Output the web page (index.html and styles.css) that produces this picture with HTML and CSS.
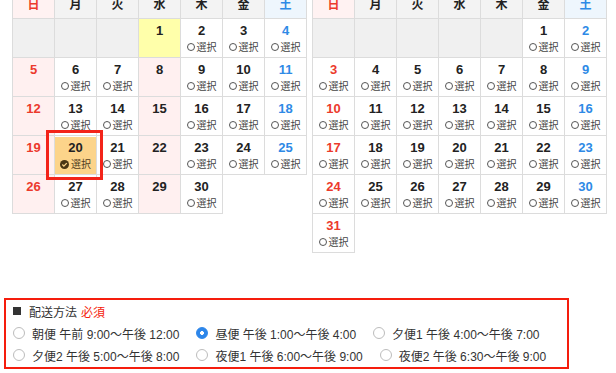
FILE: index.html
```html
<!DOCTYPE html>
<html lang="ja">
<head>
<meta charset="utf-8">
<title>配送日時</title>
<link rel="stylesheet" href="styles.css">
</head>
<body>
<div class="page">
  <div class="calendars">
    <div class="cal">
      <div class="hd sun">日</div><div class="hd">月</div><div class="hd">火</div><div class="hd">水</div><div class="hd">木</div><div class="hd">金</div><div class="hd sat">土</div>

      <div class="cell e"></div><div class="cell e"></div><div class="cell e"></div>
      <div class="cell today"><div class="num">1</div></div>
      <div class="cell"><div class="num">2</div><div class="opt"><span class="circ"></span>選択</div></div>
      <div class="cell"><div class="num">3</div><div class="opt"><span class="circ"></span>選択</div></div>
      <div class="cell sat"><div class="num">4</div><div class="opt"><span class="circ"></span>選択</div></div>

      <div class="cell hol sun"><div class="num">5</div></div>
      <div class="cell"><div class="num">6</div><div class="opt"><span class="circ"></span>選択</div></div>
      <div class="cell"><div class="num">7</div><div class="opt"><span class="circ"></span>選択</div></div>
      <div class="cell hol"><div class="num">8</div></div>
      <div class="cell"><div class="num">9</div><div class="opt"><span class="circ"></span>選択</div></div>
      <div class="cell"><div class="num">10</div><div class="opt"><span class="circ"></span>選択</div></div>
      <div class="cell sat"><div class="num">11</div><div class="opt"><span class="circ"></span>選択</div></div>

      <div class="cell hol sun"><div class="num">12</div></div>
      <div class="cell"><div class="num">13</div><div class="opt"><span class="circ"></span>選択</div></div>
      <div class="cell"><div class="num">14</div><div class="opt"><span class="circ"></span>選択</div></div>
      <div class="cell hol"><div class="num">15</div></div>
      <div class="cell"><div class="num">16</div><div class="opt"><span class="circ"></span>選択</div></div>
      <div class="cell"><div class="num">17</div><div class="opt"><span class="circ"></span>選択</div></div>
      <div class="cell sat"><div class="num">18</div><div class="opt"><span class="circ"></span>選択</div></div>

      <div class="cell hol sun"><div class="num">19</div></div>
      <div class="cell selected"><div class="num">20</div><div class="opt"><svg class="check" width="9" height="9" viewBox="0 0 10 10"><circle cx="5" cy="5" r="5" fill="#4a3614"/><path d="M2.6 5.1 L4.3 6.8 L7.5 3.5" fill="none" stroke="#fcd48a" stroke-width="1.5"/></svg>選択</div></div>
      <div class="cell"><div class="num">21</div><div class="opt"><span class="circ"></span>選択</div></div>
      <div class="cell hol"><div class="num">22</div></div>
      <div class="cell"><div class="num">23</div><div class="opt"><span class="circ"></span>選択</div></div>
      <div class="cell"><div class="num">24</div><div class="opt"><span class="circ"></span>選択</div></div>
      <div class="cell sat"><div class="num">25</div><div class="opt"><span class="circ"></span>選択</div></div>

      <div class="cell hol sun"><div class="num">26</div></div>
      <div class="cell"><div class="num">27</div><div class="opt"><span class="circ"></span>選択</div></div>
      <div class="cell"><div class="num">28</div><div class="opt"><span class="circ"></span>選択</div></div>
      <div class="cell hol"><div class="num">29</div></div>
      <div class="cell"><div class="num">30</div><div class="opt"><span class="circ"></span>選択</div></div>
    </div>

    <div class="cal">
      <div class="hd sun">日</div><div class="hd">月</div><div class="hd">火</div><div class="hd">水</div><div class="hd">木</div><div class="hd">金</div><div class="hd sat">土</div>

      <div class="cell e"></div><div class="cell e"></div><div class="cell e"></div><div class="cell e"></div><div class="cell e"></div>
      <div class="cell"><div class="num">1</div><div class="opt"><span class="circ"></span>選択</div></div>
      <div class="cell sat"><div class="num">2</div><div class="opt"><span class="circ"></span>選択</div></div>

      <div class="cell sun"><div class="num">3</div><div class="opt"><span class="circ"></span>選択</div></div>
      <div class="cell"><div class="num">4</div><div class="opt"><span class="circ"></span>選択</div></div>
      <div class="cell"><div class="num">5</div><div class="opt"><span class="circ"></span>選択</div></div>
      <div class="cell"><div class="num">6</div><div class="opt"><span class="circ"></span>選択</div></div>
      <div class="cell"><div class="num">7</div><div class="opt"><span class="circ"></span>選択</div></div>
      <div class="cell"><div class="num">8</div><div class="opt"><span class="circ"></span>選択</div></div>
      <div class="cell sat"><div class="num">9</div><div class="opt"><span class="circ"></span>選択</div></div>

      <div class="cell sun"><div class="num">10</div><div class="opt"><span class="circ"></span>選択</div></div>
      <div class="cell"><div class="num">11</div><div class="opt"><span class="circ"></span>選択</div></div>
      <div class="cell"><div class="num">12</div><div class="opt"><span class="circ"></span>選択</div></div>
      <div class="cell"><div class="num">13</div><div class="opt"><span class="circ"></span>選択</div></div>
      <div class="cell"><div class="num">14</div><div class="opt"><span class="circ"></span>選択</div></div>
      <div class="cell"><div class="num">15</div><div class="opt"><span class="circ"></span>選択</div></div>
      <div class="cell sat"><div class="num">16</div><div class="opt"><span class="circ"></span>選択</div></div>

      <div class="cell sun"><div class="num">17</div><div class="opt"><span class="circ"></span>選択</div></div>
      <div class="cell"><div class="num">18</div><div class="opt"><span class="circ"></span>選択</div></div>
      <div class="cell"><div class="num">19</div><div class="opt"><span class="circ"></span>選択</div></div>
      <div class="cell"><div class="num">20</div><div class="opt"><span class="circ"></span>選択</div></div>
      <div class="cell"><div class="num">21</div><div class="opt"><span class="circ"></span>選択</div></div>
      <div class="cell"><div class="num">22</div><div class="opt"><span class="circ"></span>選択</div></div>
      <div class="cell sat"><div class="num">23</div><div class="opt"><span class="circ"></span>選択</div></div>

      <div class="cell sun"><div class="num">24</div><div class="opt"><span class="circ"></span>選択</div></div>
      <div class="cell"><div class="num">25</div><div class="opt"><span class="circ"></span>選択</div></div>
      <div class="cell"><div class="num">26</div><div class="opt"><span class="circ"></span>選択</div></div>
      <div class="cell"><div class="num">27</div><div class="opt"><span class="circ"></span>選択</div></div>
      <div class="cell"><div class="num">28</div><div class="opt"><span class="circ"></span>選択</div></div>
      <div class="cell"><div class="num">29</div><div class="opt"><span class="circ"></span>選択</div></div>
      <div class="cell sat"><div class="num">30</div><div class="opt"><span class="circ"></span>選択</div></div>

      <div class="cell sun"><div class="num">31</div><div class="opt"><span class="circ"></span>選択</div></div>
    </div>
  </div>

  <div class="delivery">
    <div class="title"><span class="sq"></span>配送方法 <span class="req">必須</span></div>
    <div class="row">
      <label class="item"><span class="radio"></span>朝便 午前 9:00〜午後 12:00</label>
      <label class="item"><span class="radio on"></span>昼便 午後 1:00〜午後 4:00</label>
      <label class="item"><span class="radio"></span>夕便1 午後 4:00〜午後 7:00</label>
    </div>
    <div class="row">
      <label class="item"><span class="radio"></span>夕便2 午後 5:00〜午後 8:00</label>
      <label class="item"><span class="radio"></span>夜便1 午後 6:00〜午後 9:00</label>
      <label class="item"><span class="radio"></span>夜便2 午後 6:30〜午後 9:00</label>
    </div>
  </div>
</div>
</body>
</html>
```

FILE: styles.css
```css
* { box-sizing: border-box; }
html, body { margin: 0; padding: 0; background: #fff; }
body {
  font-family: "Liberation Sans", "Noto Sans CJK JP", sans-serif;
  color: #222;
  overflow: hidden;
}
.page { width: 616px; height: 373px; overflow: hidden; }

.calendars {
  display: flex;
  align-items: flex-start;
  gap: 5px;
  margin-top: -11px;
  padding-left: 12px;
}
.cal {
  display: grid;
  grid-template-columns: repeat(7, 42px);
  grid-auto-rows: 39px;
  border-top: 1px solid #dcdcdc;
  border-left: 1px solid #dcdcdc;
}
.cal > div {
  border-right: 1px solid #dcdcdc;
  border-bottom: 1px solid #dcdcdc;
}
.hd {
  height: 29px;
  line-height: 28px;
  text-align: center;
  font-size: 12px;
  font-weight: bold;
  background: #f3f3f3;
  color: #222;
  font-family: "Noto Sans CJK JP", sans-serif;
}
.hd.sun { background: #fff2f2; color: #ec3a2c; }
.hd.sat { background: #eef6fd; color: #2e8ae6; }
.cal { grid-template-rows: 29px; }

.cell {
  text-align: center;
  padding-top: 4px;
  background: #fff;
  position: relative;
}
.cell.e { background: #f0f0f0; }
.cell.hol { background: #fff0f0; }
.cell.today { background: #ffffaa; }
.num {
  font-size: 13px;
  font-weight: bold;
  line-height: 15px;
  color: #222;
}
.sun .num { color: #ec3a2c; }
.sat .num { color: #2e8ae6; }
.opt {
  margin-top: 2px;
  font-family: "Noto Sans CJK JP", sans-serif;
  font-size: 10px;
  line-height: 14px;
  color: #444;
  display: flex;
  align-items: center;
  justify-content: center;
}
.circ {
  width: 8px;
  height: 8px;
  border: 1px solid #555;
  border-radius: 50%;
  margin-right: 2px;
}
.check { margin-right: 2px; }
.cell.selected { background: #fcd48a; box-shadow: inset 0 1px 0 #fff; }
.cell.selected .opt { color: #4f3d1f; }
.cell.selected::after {
  content: "";
  position: absolute;
  left: -9px;
  right: -7px;
  top: -6px;
  bottom: -6px;
  border: 3px solid #f3241a;
  z-index: 2;
}

.delivery {
  margin: 45px 0 0 4px;
  width: 565px;
  border: 2px solid #f51d0d;
  padding: 0 7px 1px;
  font-family: "Liberation Sans", "Noto Sans CJK JP", sans-serif;
  font-size: 12px;
  color: #333;
}
.title {
  display: flex;
  align-items: center;
  height: 22px;
}
.sq {
  width: 8px;
  height: 8px;
  background: #333;
  margin-right: 8px;
}
.req { color: #f51d0d; margin-left: 4px; }
.row {
  display: flex;
  align-items: center;
  height: 22px;
}
.item {
  display: flex;
  align-items: center;
  margin-right: 17px;
  white-space: nowrap;
}
.radio {
  width: 12px;
  height: 12px;
  border-radius: 50%;
  border: 1px solid #bcbcbc;
  background: #fff;
  margin-right: 7px;
  flex: none;
}
.radio.on {
  border-color: #2d86ea;
  background: radial-gradient(circle, #fff 0 1.6px, #2d86ea 2.2px);
}
```
